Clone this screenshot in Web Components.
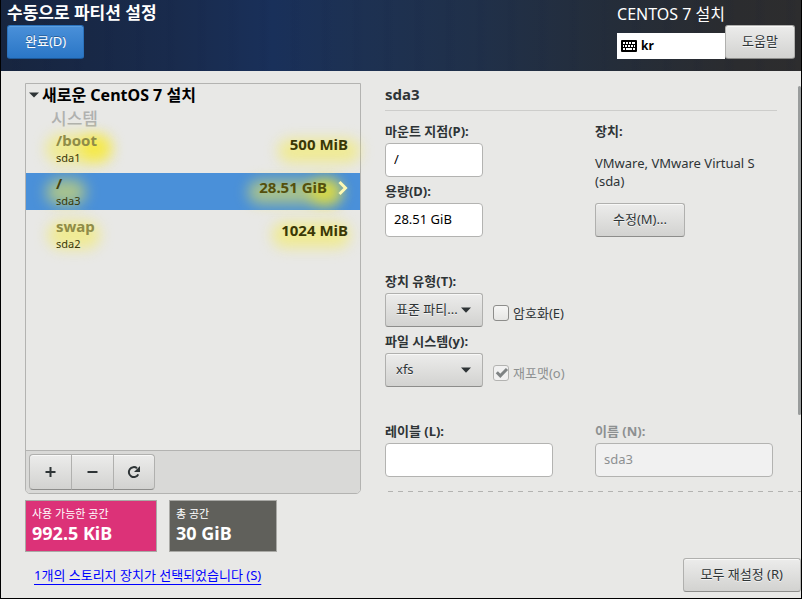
<!DOCTYPE html>
<html lang="ko">
<head>
<meta charset="utf-8">
<title>수동으로 파티션 설정</title>
<style>
    body {
        margin: 0;
        font: 13px/18px "Noto Sans", "Noto Sans CJK KR", sans-serif;
        color: #2e3436;
        background: #e8e8e6;
    }
</style>
</head>
<body>
<installer-screen></installer-screen>

<script>
// Plain push button, variant="primary" gives the blue one
customElements.define('gtk-button', class extends HTMLElement {
    constructor() {
        super();
        this.attachShadow({ mode: 'open' }).innerHTML = `
            <style>
                :host { display: inline-flex; }
                button {
                    flex: 1;
                    height: 34px;
                    box-sizing: border-box;
                    padding: 0 var(--button-padding, 17px) 2px;
                    border: 1px solid #b0b0ae;
                    border-bottom-color: #8d8d8b;
                    border-radius: 3px;
                    background: linear-gradient(#ececeb, #d2d2d0);
                    box-shadow: inset 0 1px #f8f8f7;
                    color: #2e3436;
                    font: inherit;
                    white-space: nowrap;
                    text-shadow: 0 1px #f4f4f4;
                }
                :host([variant="primary"]) button {
                    border-color: #2a72bd;
                    border-bottom-color: #1c5899;
                    background: linear-gradient(#4a90d9, #2a76c6);
                    box-shadow: inset 0 1px #5d9fe0;
                    color: #fff;
                    text-shadow: 0 -1px #2a5f99;
                }
            </style>
            <button type="button"><slot></slot></button>
        `;
    }
});

// Label above a text box
customElements.define('text-field', class extends HTMLElement {
    constructor() {
        super();
        this.attachShadow({ mode: 'open' }).innerHTML = `
            <style>
                :host { display: flex; flex-direction: column; gap: 2px; }
                label { font-weight: bold; line-height: 20px; }
                input {
                    width: var(--field-width, 98px);
                    max-width: 100%;
                    height: 34px;
                    box-sizing: border-box;
                    padding: 0 8px 2px;
                    border: 1px solid #b3b3b1;
                    border-radius: 4px;
                    background: #fff;
                    color: #000;
                    font: inherit;
                }
                :host([disabled]) label { color: #8d9091; }
                :host([disabled]) input { background: #f1f1f1; color: #8d9091; }
            </style>
            <label for="box"></label>
            <input id="box" type="text">
        `;
    }
    connectedCallback() {
        const input = this.shadowRoot.querySelector('input');
        this.shadowRoot.querySelector('label').textContent = this.getAttribute('label');
        input.value = this.getAttribute('value') || '';
        input.disabled = this.hasAttribute('disabled');
    }
});

// Label above a drop-down, the slot sits to its right
customElements.define('combo-field', class extends HTMLElement {
    constructor() {
        super();
        this.attachShadow({ mode: 'open' }).innerHTML = `
            <style>
                :host { display: flex; flex-direction: column; gap: 2px; }
                label { font-weight: bold; line-height: 20px; }
                .row { display: flex; gap: 10px; align-items: flex-end; }
                .combo { display: grid; width: 98px; align-items: center; }
                .combo > * { grid-area: 1 / 1; }
                select {
                    appearance: none;
                    height: 34px;
                    width: 100%;
                    box-sizing: border-box;
                    padding: 0 22px 2px 10px;
                    border: 1px solid #b0b0ae;
                    border-bottom-color: #8d8d8b;
                    border-radius: 3px;
                    background: linear-gradient(#ececeb, #d2d2d0);
                    box-shadow: inset 0 1px #f8f8f7;
                    color: #2e3436;
                    font: inherit;
                    text-shadow: 0 1px #f4f4f4;
                }
                svg { justify-self: end; margin-right: 12px; pointer-events: none; }
            </style>
            <label for="list"></label>
            <div class="row">
                <div class="combo">
                    <select id="list"><option></option></select>
                    <svg width="10" height="6" viewBox="0 0 10 6"><path d="M0 .5h10L5 5.8z" fill="#2e3436"/></svg>
                </div>
                <slot></slot>
            </div>
        `;
    }
    connectedCallback() {
        this.shadowRoot.querySelector('label').textContent = this.getAttribute('label');
        this.shadowRoot.querySelector('option').textContent = this.getAttribute('value');
    }
});

customElements.define('check-option', class extends HTMLElement {
    constructor() {
        super();
        this.attachShadow({ mode: 'open' }).innerHTML = `
            <style>
                :host { display: block; }
                label { display: flex; align-items: center; gap: 4px; height: 28px; white-space: nowrap; }
                .tick { display: grid; }
                .tick > * { grid-area: 1 / 1; }
                input {
                    appearance: none;
                    width: 16px;
                    height: 16px;
                    margin: 0;
                    box-sizing: border-box;
                    border: 1px solid #8d8d8b;
                    border-radius: 3px;
                    background: linear-gradient(#f6f6f5, #e6e6e4);
                }
                svg { visibility: hidden; pointer-events: none; }
                input:checked + svg { visibility: visible; }
                :host([disabled]) label { color: #8d9091; }
                :host([disabled]) input { border-color: #b3b3b1; background: #f1f1f1; }
            </style>
            <label>
                <span class="tick">
                    <input type="checkbox">
                    <svg width="16" height="16" viewBox="0 0 16 16"><path d="M3.8 7.2L7.3 10.8L14 4" fill="none" stroke="#7f8384" stroke-width="3"/></svg>
                </span>
                <slot></slot>
            </label>
        `;
    }
    connectedCallback() {
        const input = this.shadowRoot.querySelector('input');
        input.checked = this.hasAttribute('checked');
        input.disabled = this.hasAttribute('disabled');
    }
});

// One mount point in the list
customElements.define('partition-row', class extends HTMLElement {
    constructor() {
        super();
        this.attachShadow({ mode: 'open' }).innerHTML = `
            <style>
                :host {
                    display: flex;
                    position: relative;
                    height: 37px;
                    padding: 0 12px 0 30px;
                    color: #3a3806;
                }
                :host([selected]) { background: #4a90d9; }
                .name, .size { position: relative; font-size: 15px; font-weight: bold; line-height: 20px; }
                .name { color: #8f8c48; }
                :host([selected]) .name { color: #453f0c; }
                :host([selected]) .size { color: #54500c; }
                .device { position: relative; font-size: 11px; line-height: 16px; }
                .left { flex: 1; }
                .size { line-height: 28px; }
                svg { display: none; position: relative; margin: 7px 0 0 11px; }
                :host([selected]) svg { display: block; }
                /* soft highlighter strokes behind the texts */
                ::slotted(i) {
                    position: absolute;
                    border-radius: 16px;
                    pointer-events: none;
                    filter: blur(7px);
                }
            </style>
            <slot></slot>
            <div class="left">
                <div class="name"></div>
                <div class="device"></div>
            </div>
            <div class="size"></div>
            <svg width="10" height="16" viewBox="0 0 10 16"><path d="M1.5 2L7.5 8L1.5 14" fill="none" stroke="#fdf9b4" stroke-width="3"/></svg>
        `;
    }
    connectedCallback() {
        for (const key of ['name', 'device', 'size']) {
            this.shadowRoot.querySelector('.' + key).textContent = this.getAttribute(key);
        }
    }
});

customElements.define('partition-list', class extends HTMLElement {
    constructor() {
        super();
        this.attachShadow({ mode: 'open' }).innerHTML = `
            <style>
                :host {
                    display: flex;
                    flex-direction: column;
                    flex: 1;
                    border: 1px solid #b3b3b1;
                    border-radius: 0 0 5px 5px;
                }
                .rows { flex: 1; }
                h2 {
                    display: flex;
                    align-items: center;
                    gap: 3px;
                    margin: 0;
                    padding-left: 3px;
                    font-size: 16px;
                    line-height: 22px;
                    color: #000;
                }
                h3 {
                    margin: 2px 0 0;
                    padding-left: 25px;
                    font-size: 17px;
                    font-weight: 500;
                    line-height: 22px;
                    color: #b0b1b0;
                }
                .items { display: flex; flex-direction: column; gap: 6px; }
                .toolbar {
                    display: flex;
                    padding: 3px;
                    border-top: 1px solid #b3b3b1;
                    border-radius: 0 0 4px 4px;
                    background: #d9d9d7;
                }
                button {
                    display: grid;
                    place-items: center;
                    width: 42px;
                    height: 36px;
                    padding: 0;
                    box-sizing: border-box;
                    border: 1px solid #b0b0ae;
                    border-bottom-color: #8d8d8b;
                    border-right-width: 0;
                    background: linear-gradient(#ececeb, #d2d2d0);
                    box-shadow: inset 0 1px #f8f8f7;
                }
                button:first-child { border-radius: 4px 0 0 4px; }
                button:last-child { border-right-width: 1px; border-radius: 0 4px 4px 0; }
            </style>
            <div class="rows">
                <h2>
                    <svg width="10" height="6" viewBox="0 0 10 6"><path d="M0 .5h10L5 5.5z" fill="#2e3436"/></svg>
                    <slot name="title"></slot>
                </h2>
                <h3><slot name="group"></slot></h3>
                <div class="items"><slot></slot></div>
            </div>
            <div class="toolbar">
                <button type="button" aria-label="추가">
                    <svg width="16" height="16" viewBox="0 0 16 16"><path d="M7.5 3v10M2.5 8h10" stroke="#2e3436" stroke-width="2"/></svg>
                </button>
                <button type="button" aria-label="제거">
                    <svg width="16" height="16" viewBox="0 0 16 16"><path d="M2.5 8h10" stroke="#2e3436" stroke-width="2"/></svg>
                </button>
                <button type="button" aria-label="새로 고침">
                    <svg width="16" height="16" viewBox="0 0 16 16">
                        <path d="M12.3 10.4A5 5 0 1 1 11 4.2" fill="none" stroke="#2e3436" stroke-width="2"/>
                        <path d="M14 2v6H8z" fill="#2e3436"/>
                    </svg>
                </button>
            </div>
        `;
    }
});

customElements.define('space-box', class extends HTMLElement {
    constructor() {
        super();
        this.attachShadow({ mode: 'open' }).innerHTML = `
            <style>
                :host {
                    display: block;
                    box-sizing: border-box;
                    height: 52px;
                    padding: 4px 6px;
                    border: 1px solid #a9a9a5;
                    background: var(--box-color, #60605b);
                    color: #fff;
                }
                .caption { font-size: 11px; line-height: 18px; }
                .amount { font-size: 18px; font-weight: bold; line-height: 20px; }
            </style>
            <div class="caption"></div>
            <div class="amount"><slot></slot></div>
        `;
    }
    connectedCallback() {
        this.shadowRoot.querySelector('.caption').textContent = this.getAttribute('caption');
    }
});

customElements.define('top-bar', class extends HTMLElement {
    constructor() {
        super();
        this.attachShadow({ mode: 'open' }).innerHTML = `
            <style>
                :host {
                    display: flex;
                    justify-content: space-between;
                    align-items: flex-end;
                    padding: 1px 6px 12px;
                    color: #fff;
                    background:
                        repeating-linear-gradient(90deg, transparent 0 9px, rgba(10, 20, 60, .05) 13px 15px, transparent 22px 31px),
                        linear-gradient(90deg, #17253f 0, #192b4d 22%, #19305a 34%, #1d3152 45%, #203049 60%, #242d3a 76%, #2b2c2f 92%, #2d2d2e 100%);
                }
                h1 { margin: 0; font-size: 17px; line-height: 24px; }
                .right { display: flex; align-items: flex-end; }
                .right gtk-button { --button-padding: 16px; }
                .product { font-size: 16px; line-height: 22px; margin-bottom: 8px; }
                .layout {
                    display: flex;
                    align-items: center;
                    gap: 4px;
                    min-width: 104px;
                    height: 26px;
                    padding-left: 4px;
                    background: #fff;
                    color: #000;
                    font-weight: bold;
                    font-size: 12px;
                }
            </style>
            <div>
                <h1>수동으로 파티션 설정</h1>
                <gtk-button variant="primary">완료(D)</gtk-button>
            </div>
            <div class="right">
                <div>
                    <div class="product">CENTOS 7 설치</div>
                    <div class="layout">
                        <svg width="16" height="12" viewBox="0 0 16 12">
                            <rect width="16" height="12" rx="1" fill="#000"/>
                            <path d="M2 3h2M5 3h2M8 3h2M11 3h3M2 6h1M4 6h2M7 6h2M10 6h2M13 6h1M2 9h2M5 9h6M12 9h2" stroke="#fff" stroke-width="2"/>
                        </svg>
                        <span>kr</span>
                    </div>
                </div>
                <gtk-button>도움말</gtk-button>
            </div>
        `;
    }
});

customElements.define('device-panel', class extends HTMLElement {
    constructor() {
        super();
        this.attachShadow({ mode: 'open' }).innerHTML = `
            <style>
                :host { display: block; position: relative; }
                .scroll {
                    position: absolute;
                    top: 3px;
                    right: 0;
                    width: 3px;
                    height: 329px;
                    border-radius: 2px;
                    background: #999c9c;
                }
                h2 {
                    margin: 0 24px 10px 0;
                    padding-bottom: 5px;
                    border-bottom: 1px solid #cdcdcb;
                    font-size: 15px;
                    line-height: 22px;
                }
                .grid {
                    display: grid;
                    grid-template-columns: 1fr 1fr;
                    column-gap: 28px;
                    row-gap: 34px;
                    margin-right: 24px;
                }
                .fields { display: flex; flex-direction: column; gap: 4px; }
                .wide { --field-width: 168px; }
                .name { --field-width: 178px; }
                .device { display: flex; flex-direction: column; align-items: flex-start; }
                h4 { margin: 0; font-size: 13px; line-height: 20px; }
                p { margin: 13px 0 13px; }
                .cut {
                    height: 1px;
                    margin: 14px 0 0 3px;
                    background: repeating-linear-gradient(90deg, #b3b3b1 0 5px, transparent 5px 10px);
                }
            </style>
            <div class="scroll"></div>
            <h2>sda3</h2>
            <div class="grid">
                <div class="fields">
                    <text-field label="마운트 지점(P):" value="/"></text-field>
                    <text-field label="용량(D):" value="28.51 GiB"></text-field>
                </div>
                <div class="device">
                    <h4>장치:</h4>
                    <p>VMware, VMware Virtual S (sda)</p>
                    <gtk-button>수정(M)...</gtk-button>
                </div>
                <div class="fields">
                    <combo-field label="장치 유형(T):" value="표준 파티...">
                        <check-option>암호화(E)</check-option>
                    </combo-field>
                    <combo-field label="파일 시스템(y):" value="xfs">
                        <check-option checked disabled>재포맷(o)</check-option>
                    </combo-field>
                </div>
                <div></div>
                <text-field class="wide" label="레이블 (L):"></text-field>
                <text-field class="name" label="이름 (N):" value="sda3" disabled></text-field>
            </div>
            <div class="cut"></div>
        `;
    }
});

customElements.define('installer-screen', class extends HTMLElement {
    constructor() {
        super();
        this.attachShadow({ mode: 'open' }).innerHTML = `
            <style>
                :host {
                    display: flex;
                    flex-direction: column;
                    min-height: 100vh;
                    box-sizing: border-box;
                    border: solid #000;
                    border-width: 0 1px 1px;
                }
                main {
                    flex: 1;
                    display: grid;
                    grid-template-columns: 21fr 26fr;
                    column-gap: 24px;
                    padding: 12px 0 0 24px;
                }
                .left { display: flex; flex-direction: column; }
                .spaces { display: flex; gap: 12px; margin-top: 6px; }
                .free { width: 132px; --box-color: #dc3278; }
                .total { width: 108px; }
                footer {
                    display: flex;
                    justify-content: space-between;
                    align-items: center;
                    padding: 6px 0 6px 33px;
                }
                a { color: #00f; text-underline-offset: 4px; }
                .mark { background: rgba(246, 236, 80, .55); }
                .strong { background: rgba(250, 232, 20, .6); }
            </style>
            <top-bar></top-bar>
            <main>
                <div class="left">
                    <partition-list>
                        <span slot="title">새로운 CentOS 7 설치</span>
                        <span slot="group">시스템</span>
                        <partition-row name="/boot" device="sda1" size="500 MiB">
                            <i class="mark" style="left: 20px; top: 4px; width: 66px; height: 30px"></i>
                            <i class="strong" style="left: 54px; top: 6px; width: 30px; height: 24px"></i>
                            <i class="mark" style="right: 0; top: 9px; width: 82px; height: 24px"></i>
                        </partition-row>
                        <partition-row name="/" device="sda3" size="28.51 GiB" selected>
                            <i class="mark" style="left: 20px; top: 6px; width: 40px; height: 26px"></i>
                            <i class="mark" style="right: 18px; top: 7px; width: 94px; height: 24px"></i>
                            <i class="strong" style="right: 20px; top: 6px; width: 30px; height: 26px"></i>
                        </partition-row>
                        <partition-row name="swap" device="sda2" size="1024 MiB">
                            <i class="mark" style="left: 22px; top: 5px; width: 52px; height: 28px"></i>
                            <i class="mark" style="right: 10px; top: 6px; width: 78px; height: 26px"></i>
                        </partition-row>
                    </partition-list>
                    <div class="spaces">
                        <space-box class="free" caption="사용 가능한 공간">992.5 KiB</space-box>
                        <space-box class="total" caption="총 공간">30 GiB</space-box>
                    </div>
                </div>
                <device-panel></device-panel>
            </main>
            <footer>
                <a href="#storage">1개의 스토리지 장치가 선택되었습니다 (S)</a>
                <gtk-button>모두 재설정 (R)</gtk-button>
            </footer>
        `;
    }
});
</script>
</body>
</html>
